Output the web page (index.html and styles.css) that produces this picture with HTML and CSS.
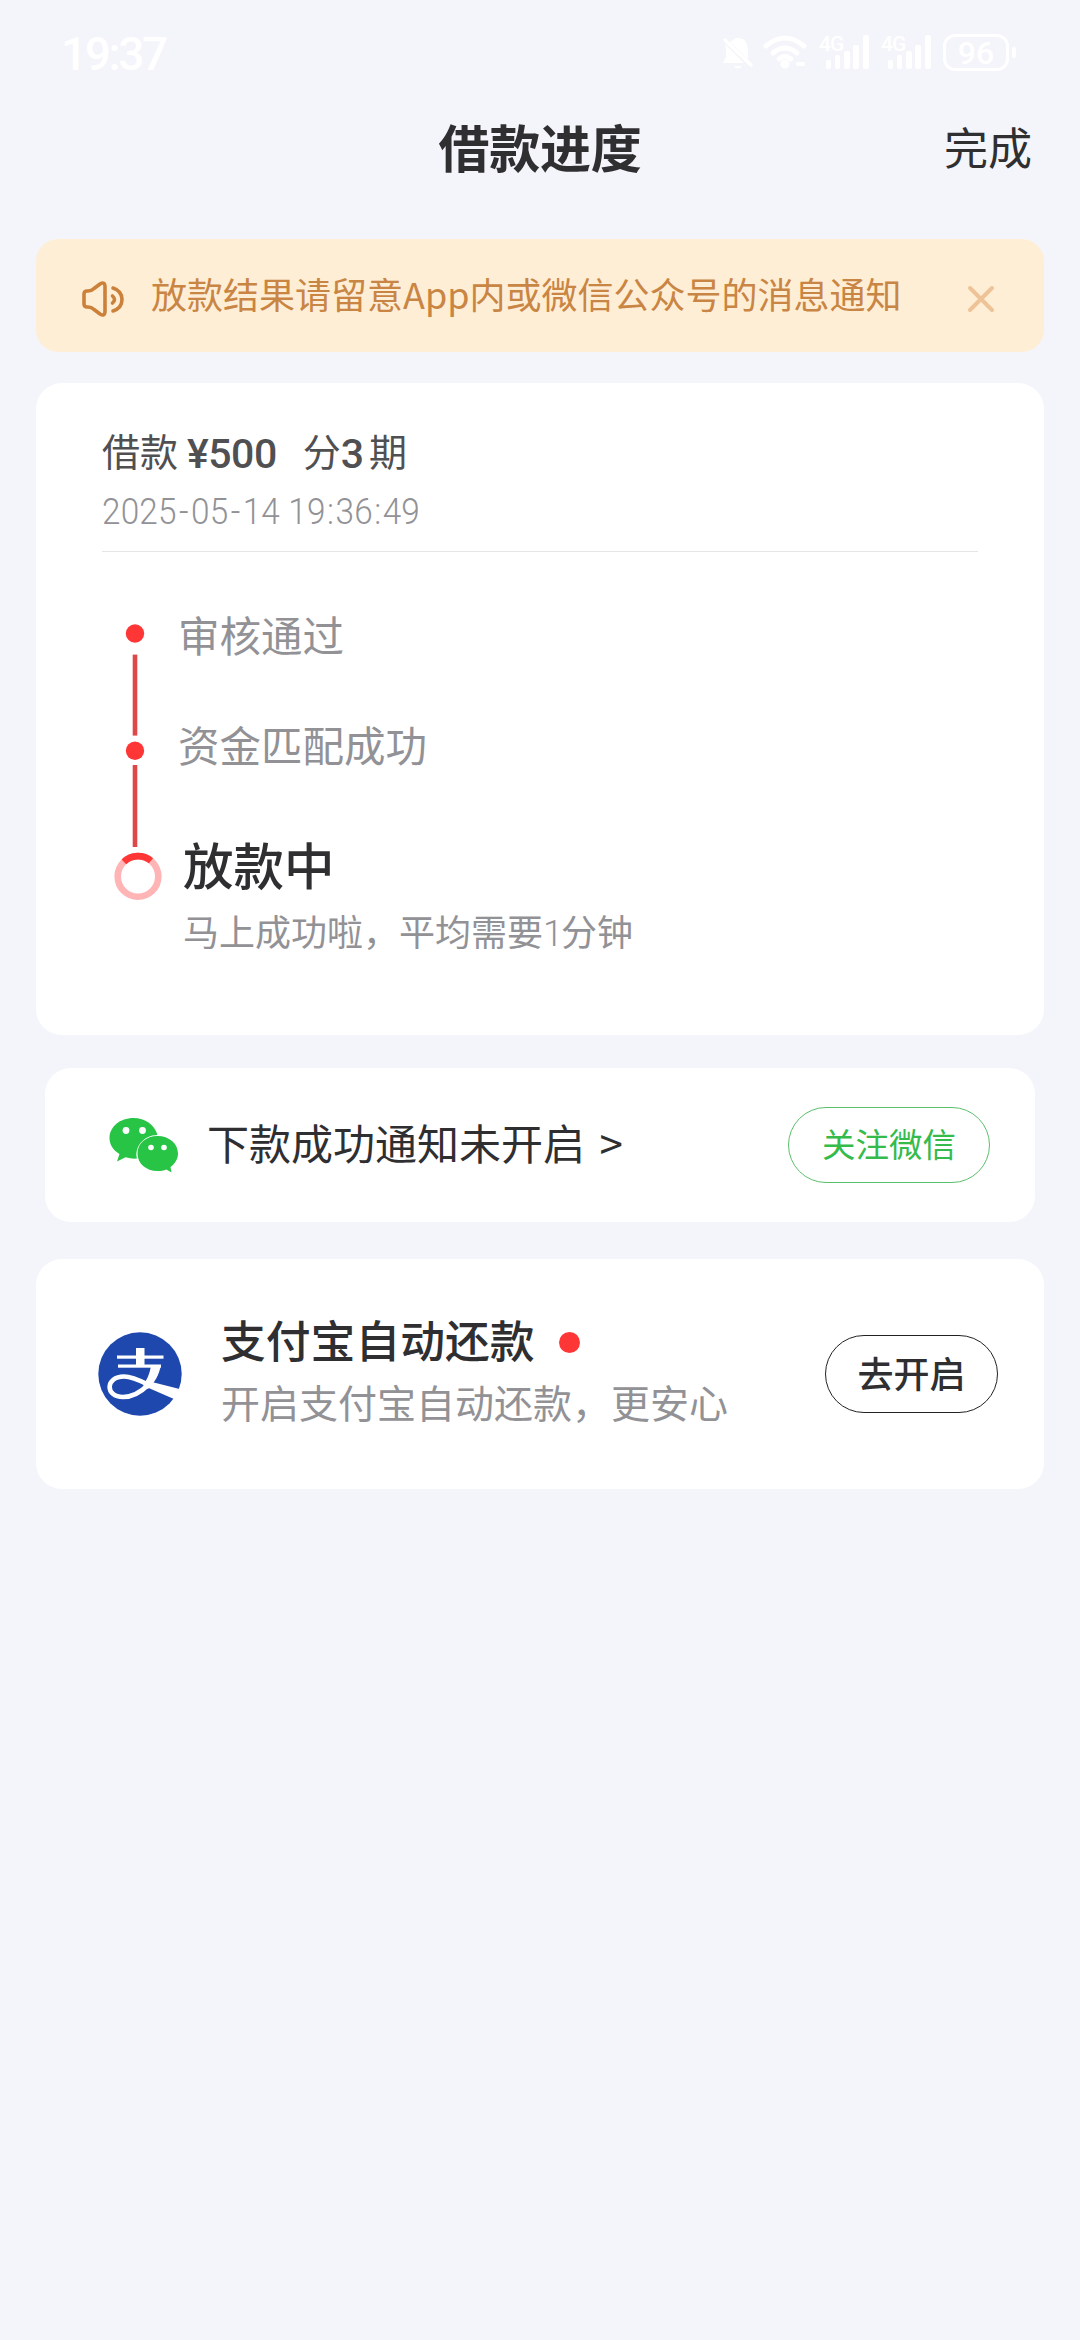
FILE: index.html
```html
<!DOCTYPE html>
<html lang="zh-CN">
<head>
<meta charset="utf-8">
<title>借款进度</title>
<link rel="stylesheet" href="styles.css">
</head>
<body>
<div class="statusbar">
  <span class="clock">19:37</span>
  <div class="status-icons">
    <svg class="bell" width="32" height="35" viewBox="0 0 32 35" fill="#fff"><path d="M8 7 L14 3 Q26 2 26 16 V24 Z"/><path d="M3 9 L22 28 H1 L4 22 V14 Z"/><path d="M3 5 L29 30" stroke="#fff" stroke-width="3.5" stroke-linecap="round"/><path d="M12 31 h8 q-4 5 -8 0"/></svg>
    <svg class="wifi" width="44" height="35" viewBox="0 0 44 35" fill="none" stroke="#fff" stroke-width="5" stroke-linecap="round"><path d="M3 11 Q22 -5 41 11"/><path d="M10 18 Q22 8 34 18"/><path d="M16 24 Q22 19 28 24" /><circle cx="22" cy="29" r="2"/><path d="M35 29 h5" stroke-width="4"/></svg>
    <div class="signal"><span>4G</span><svg width="43" height="35" viewBox="0 0 43 35" fill="#fff"><rect x="0" y="25" width="5" height="9" rx="2"/><rect x="9" y="20" width="5" height="14" rx="2"/><rect x="18" y="16" width="6" height="18" rx="2"/><rect x="27" y="10" width="6" height="24" rx="2"/><rect x="37" y="0" width="6" height="34" rx="2"/></svg></div>
    <div class="signal"><span>4G</span><svg width="43" height="35" viewBox="0 0 43 35" fill="#fff"><rect x="0" y="25" width="5" height="9" rx="2"/><rect x="9" y="20" width="5" height="14" rx="2"/><rect x="18" y="16" width="6" height="18" rx="2"/><rect x="27" y="10" width="6" height="24" rx="2"/><rect x="37" y="0" width="6" height="34" rx="2"/></svg></div>
    <div class="battery"><span class="level">96</span><i></i></div>
  </div>
</div>

<header class="navbar">
  <h1>借款进度</h1>
  <a class="done">完成</a>
</header>

<main>
  <section class="notice">
    <svg width="44" height="38" viewBox="0 0 44 38" fill="none" stroke="#cc813b" stroke-width="3.6" stroke-linejoin="round" stroke-linecap="round"><path d="M3 14 Q3 11 6 11 Q10 11.500 13 8.500 L19 4 Q24 1 24 7 V31 Q24 37 19 34 L13 29.500 Q10 26.500 6 27 Q3 27 3 24 Z"/><path d="M32 8 Q41 11 41 19.500 Q41 28 32 31"/><path d="M31.500 16 Q35.500 19.500 31.500 23" /></svg>
    <p>放款结果请留意App内或微信公众号的消息通知</p>
    <svg class="close" width="30" height="30" viewBox="0 0 30 30" stroke="#eec397" stroke-width="4" stroke-linecap="round"><path d="M4 4 L26 26 M26 4 L4 26"/></svg>
  </section>

  <section class="card progress">
    <div class="summary">
      <div class="amount"><span>借款</span><b class="money">¥500</b><span class="split">分</span><b class="terms">3</b><span>期</span></div>
      <time>2025<i>-</i>05<i>-</i>14 19<i class="colon">:</i>36<i class="colon">:</i>49</time>
    </div>
    <div class="timeline">
      <svg class="track" width="50" height="300" viewBox="0 0 50 300"><g fill="#ff3636"><circle cx="22" cy="23.500" r="9.200"/><circle cx="22" cy="140.700" r="9.200"/></g><g fill="#df4848"><rect x="19.700" y="44.600" width="4.600" height="81"/><rect x="19.700" y="155" width="4.600" height="82"/></g><circle cx="25" cy="266.400" r="20.300" fill="none" stroke="#ffb5b6" stroke-width="6.600"/><path d="M10.900 251.800 A20.300 20.300 0 0 1 38 250.800" fill="none" stroke="#ff3636" stroke-width="6.600"/></svg>
      <ol class="steps">
        <li>审核通过</li>
        <li>资金匹配成功</li>
        <li class="current"><strong>放款中</strong><small>马上成功啦，平均需要<span class="num">1</span>分钟</small></li>
      </ol>
    </div>
  </section>

  <section class="card wechat">
    <svg width="70" height="56" viewBox="0 0 70 56"><path fill="#28c445" d="M24.500 1 C11 1 .5 9.800 .5 21 C.5 28 4.500 33.500 10.500 37 L8 44.500 L16.500 40.300 C21 41.600 25 41.900 28 41.500 C25 31 34 18 48.500 18 C46 8 36 1 24.500 1 Z"/><path fill="#28c445" d="M48.500 19 C37 19 28.500 26.500 28.500 36.500 C28.500 46.500 37 54 48.500 54 C52 54 54.500 53.500 57.500 52.500 L62.500 55.600 L61.500 50 C66 46.500 69 42 69 36.500 C69 26.500 60 19 48.500 19 Z"/><g fill="#fff"><circle cx="17" cy="13.500" r="3.400"/><circle cx="33.500" cy="13.500" r="3.400"/><circle cx="42" cy="30.500" r="2.800"/><circle cx="55" cy="30.500" r="2.800"/></g></svg>
    <p>下款成功通知未开启 <span class="gt">&gt;</span></p>
    <button class="follow">关注微信</button>
  </section>

  <section class="card alipay">
    <svg width="84" height="84" viewBox="0 0 84 84"><circle cx="42" cy="42" r="41.700" fill="#1f48ae"/><g fill="#fff"><rect x="19" y="23.500" width="46.500" height="3.200"/><rect x="20" y="32.500" width="43" height="3.200"/><rect x="38" y="16" width="8.500" height="18"/><path d="M53 33 H63 C61 43 57 50 50 57 L45 53 C49.500 47 52 41 53 33 Z"/><path d="M46 49 L52 49.500 L81.500 57 C80.500 60.500 78.500 64 76 67 L46 54 Z"/></g><path d="M50 53 C43 60 35 65 25 65 C7 65 7 44.500 26 44.500 C34 44.500 42 48.500 50 52.500" fill="none" stroke="#fff" stroke-width="4.600"/></svg>
    <div class="copy">
      <h2>支付宝自动还款<i class="dot"></i></h2>
      <p>开启支付宝自动还款，更安心</p>
    </div>
    <button class="enable">去开启</button>
  </section>
</main>
</body>
</html>
```
FILE: styles.css
```css
* { box-sizing: border-box; }
body {
  margin: 0;
  height: 2340px;
  background: #f4f5fa;
  color: #2f2f32;
  font-family: "Noto Sans CJK SC", sans-serif;
  overflow: hidden;
}
h1, h2, p, ol { margin: 0; padding: 0; }
svg { display: block; flex: none; }
button { font-family: inherit; background: none; padding: 0 0 5px; flex: none; }

.statusbar {
  height: 107px;
  padding: 0 64px 0 61px;
  display: flex;
  justify-content: space-between;
  align-items: center;
  color: #fff;
  font-family: Inter, sans-serif;
}
.clock { font: 500 46px/54px Roboto, sans-serif; letter-spacing: -2.4px; }
.status-icons { display: flex; align-items: center; height: 35px; margin-top: -2px; }
.wifi { margin-left: 9px; }
.signal { position: relative; width: 49px; margin-left: 13px; display: flex; justify-content: flex-end; }
.signal span { position: absolute; left: -1px; top: 0; font: 500 21px/18px Roboto, sans-serif; letter-spacing: -1px; }
.battery { display: flex; align-items: center; gap: 3px; margin-left: 12px; }
.level { width: 66px; height: 37px; border: 3px solid #fff; border-radius: 12px; font: 500 32px/32px Roboto, sans-serif; text-align: center; }
.battery i { width: 4px; height: 11px; border-radius: 2px; background: #fff; }

.navbar { height: 132px; display: grid; grid-template-columns: 1fr auto 1fr; padding: 1px 48px 0 48px; }
.navbar h1 { grid-column: 2; font-size: 51px; line-height: 76px; font-weight: 700; letter-spacing: -.3px; }
.done { justify-self: end; font-size: 44px; line-height: 76px; }

main { display: flex; flex-direction: column; padding: 0 36px; }
.notice { height: 113px; border-radius: 22px; background: #ffeed6; display: flex; align-items: center; padding: 0 48px 0 45px; color: #c98543; }
.notice svg { margin-top: 7px; }
.notice p { flex: 1; margin: -5px 0 0 26px; font-size: 36px; line-height: 54px; }

.card { background: #fff; border-radius: 26px; }
.progress { height: 652px; margin-top: 31px; padding: 39px 66px 0; }
.summary { height: 130px; border-bottom: 1px solid #e6e6e9; }
.amount { display: flex; align-items: flex-start; height: 56px; font-size: 38px; line-height: 56px; color: #505052; }
.amount b { font: 500 41px/65px Roboto, sans-serif; }
.amount .money { margin-left: 9px; letter-spacing: -.5px; }
.split { margin-left: 26px; }
.amount .terms { margin-right: 6px; letter-spacing: -1px; }
time { display: block; width: 400px; transform: scaleX(.9); transform-origin: left; color: #929296; font: 350 37px/50px Roboto, sans-serif; letter-spacing: .2px; margin-top: 9px; }
time i { font-style: normal; margin: 0 2.6px; }
time .colon { margin: 0 1.5px; }
.timeline { display: flex; padding: 58px 0 0 11px; }
.steps { list-style: none; margin: -6px 0 0 15px; font-size: 41.500px; line-height: 60px; color: #929296; }
.steps li + li { margin-top: 50px; }
.steps .current { margin: 52px 0 0 5px; }
.current strong { display: block; font-size: 50.500px; line-height: 74px; font-weight: 500; color: #2f2f32; }
.current small { display: block; margin-top: 3px; font-size: 36px; line-height: 54px; }
.num { display: inline-block; width: 18px; font-family: Roboto, sans-serif; font-weight: 350; }

.wechat { height: 154px; margin: 33px 9px 0; padding: 0 45px 0 64px; display: flex; align-items: center; }
.wechat p { flex: 1; margin: -6px 0 0 28px; font-size: 42px; line-height: 60px; }
.gt { margin-left: 5px; }
.follow { width: 202px; height: 76px; border: 1px solid #5cbf6c; border-radius: 38px; color: #35bb4b; font-size: 33.500px; }

.alipay { height: 230px; margin-top: 37px; padding: 0 46px 0 62px; display: flex; align-items: center; }
.copy { flex: 1; margin: -11px 0 0 39px; }
.copy h2 { display: flex; align-items: center; font-size: 44.800px; line-height: 64px; font-weight: 500; }
.dot { width: 21px; height: 21px; border-radius: 50%; background: #ff3636; margin: 7px 0 0 24px; }
.copy p { font-size: 39px; line-height: 60px; color: #929296; }
.enable { width: 173px; height: 78px; border: 1px solid #222; border-radius: 39px; color: #2f2f32; font-size: 36px; font-weight: 500; }
```
